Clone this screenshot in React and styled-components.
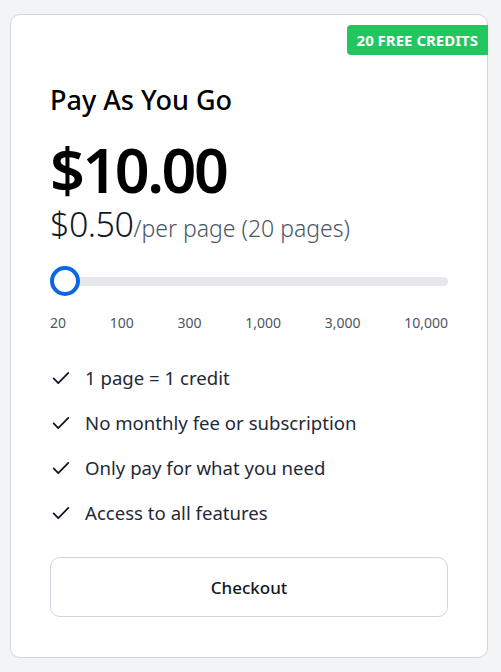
import React from "react";
import styled, { createGlobalStyle } from "styled-components";

const Global = createGlobalStyle`
  html, body { margin: 0; padding: 0; background: #f3f4f6; }
  body { font-family: "Noto Sans", "Open Sans", sans-serif; }
  * { box-sizing: border-box; }
`;

const Page = styled.div`
  padding: 14px 13px 14px 10px;
  width: 501px;
`;

const Card = styled.div`
  position: relative;
  background: #fff;
  border: 1px solid #d1d5db;
  border-radius: 10px;
  padding: 67px 39px 40px 39px;
  display: flex;
  flex-direction: column;
`;

const Badge = styled.div`
  position: absolute;
  top: 10px;
  right: -1px;
  height: 30px;
  padding: 0 10px;
  background: #22c55e;
  color: #fff;
  font-weight: 700;
  font-size: 15px;
  border-radius: 4px 0 0 4px;
  display: flex;
  align-items: center;
`;

const Title = styled.h2`
  margin: 0;
  font-size: 27px;
  font-weight: 500;
  color: #000;
  line-height: 36px;
`;

const Price = styled.div`
  margin-top: 22px;
  font-size: 61px;
  font-weight: 650;
  line-height: 60px;
  color: #000;
  letter-spacing: -2.5px;
`;

const PerRow = styled.div`
  display: flex;
  align-items: baseline;
  line-height: 40px;
  margin-top: 4px;
`;

const Unit = styled.span`
  font-size: 34px;
  font-weight: 300;
  color: #111827;
  letter-spacing: -0.5px;
`;

const Per = styled.span`
  font-size: 23px;
  font-weight: 300;
  color: #4b5563;
`;

const SliderWrap = styled.div`
  position: relative;
  margin-top: 18px;
  height: 30px;
  display: flex;
  align-items: center;
`;

const Track = styled.div`
  width: 100%;
  height: 9px;
  border-radius: 5px;
  background: #e5e7eb;
`;

const Thumb = styled.div`
  position: absolute;
  left: 0;
  top: 0;
  width: 30px;
  height: 30px;
  border-radius: 50%;
  border: 4px solid #0b66e4;
  background: #fff;
`;

const Ticks = styled.div`
  display: flex;
  justify-content: space-between;
  margin-top: 18px;
  font-size: 14px;
  color: #4b5563;
  line-height: 18px;
`;

const List = styled.ul`
  list-style: none;
  padding: 0;
  margin: 33px 0 0 0;
  display: flex;
  flex-direction: column;
  gap: 19px;
`;

const Item = styled.li`
  display: flex;
  align-items: center;
  gap: 13px;
  font-size: 18.6px;
  color: #1f2937;
  line-height: 26px;
`;

const Button = styled.button`
  margin-top: 31px;
  width: 100%;
  height: 60px;
  background: #fff;
  border: 1px solid #d1d5db;
  border-radius: 10px;
  font-family: inherit;
  font-size: 17px;
  font-weight: 500;
  color: #111827;
`;

const Check = () => (
  <svg width="22" height="22" viewBox="0 0 24 24" fill="none" stroke="#111827" strokeWidth="2" strokeLinecap="round" strokeLinejoin="round">
    <path d="M4 12.5l5 5L20 6.5" />
  </svg>
);

const features = [
  "1 page = 1 credit",
  "No monthly fee or subscription",
  "Only pay for what you need",
  "Access to all features",
];

const ticks = ["20", "100", "300", "1,000", "3,000", "10,000"];

export default function App() {
  return (
    <>
      <Global />
      <Page>
        <Card>
          <Badge>20 FREE CREDITS</Badge>
          <Title>Pay As You Go</Title>
          <Price>$10.00</Price>
          <PerRow>
            <Unit>$0.50</Unit>
            <Per>/per page (20 pages)</Per>
          </PerRow>
          <SliderWrap>
            <Track />
            <Thumb />
          </SliderWrap>
          <Ticks>
            {ticks.map((t) => (
              <span key={t}>{t}</span>
            ))}
          </Ticks>
          <List>
            {features.map((f) => (
              <Item key={f}>
                <Check />
                {f}
              </Item>
            ))}
          </List>
          <Button>Checkout</Button>
        </Card>
      </Page>
    </>
  );
}
